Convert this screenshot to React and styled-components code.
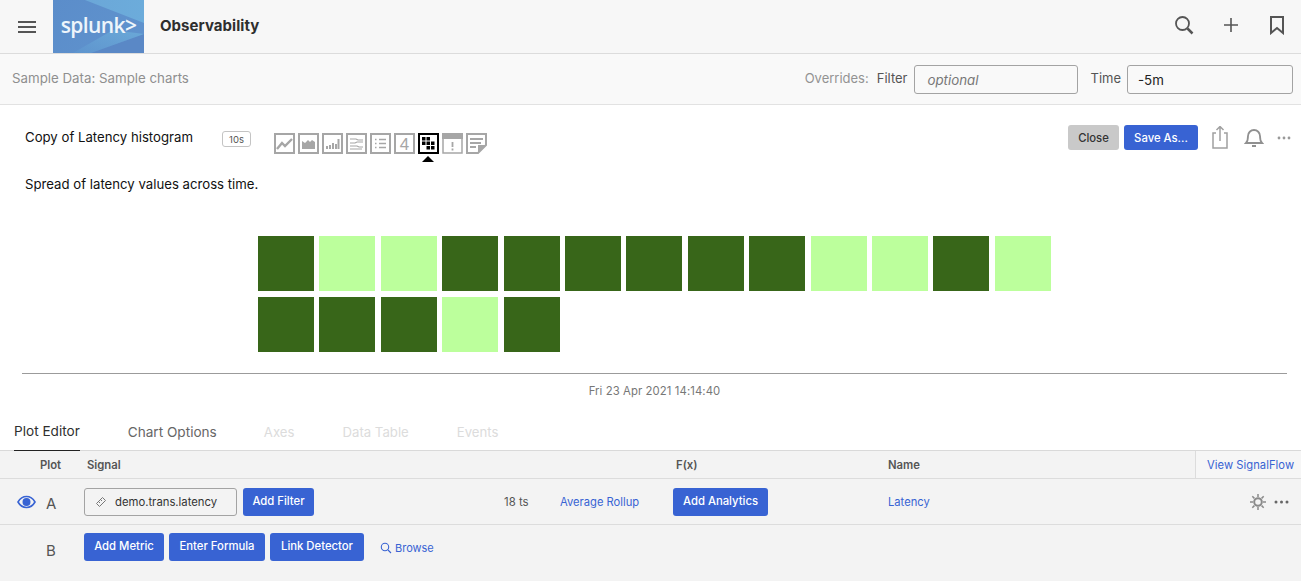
import React from "react";
import styled, { createGlobalStyle } from "styled-components";

const Global = createGlobalStyle`
  html, body { margin: 0; padding: 0; background: #fff; }
  body { font-family: Inter, "Liberation Sans", sans-serif; color: #2b2b2b; }
  * { box-sizing: border-box; }
`;
const Page = styled.div`width: 1301px; height: 581px; overflow: hidden; display: flex; flex-direction: column;`;
const TopBar = styled.header`height: 54px; flex: none; display: flex; align-items: center; background: #f7f7f7; border-bottom: 1px solid #dcdcdc;`;
const MenuBtn = styled.div`width: 53px; display: flex; justify-content: center;`;
const Logo = styled.div`
  position: relative; width: 91px; height: 53px; display: flex; align-items: center; justify-content: center; padding-bottom: 3px;
  color: #eef5fb; font-family: "Open Sans", sans-serif; font-size: 21px; letter-spacing: -0.6px; font-weight: 600;
  span { position: relative; }
  svg { position: absolute; inset: 0; }
`;
const Product = styled.div`margin-left: 16px; margin-top: -2px; font-size: 15px; font-weight: 700; color: #2e2e2e; flex: 1; letter-spacing: 0.05px;`;
const TopIcons = styled.div`display: flex; align-items: center; padding-right: 16px; margin-top: -3px; color: #555;
  svg + svg { margin-left: 25px; }
  svg:last-child { margin-left: 27px; }
`;
const SubBar = styled.div`height: 51px; flex: none; display: flex; align-items: center; background: #f9f9f9; border-bottom: 1px solid #e2e2e2; padding: 0 8px 0 12px;`;
const Crumb = styled.div`font-size: 13.3px; color: #8f8f8f; flex: 1; margin-top: -2px;`;
const OverrideLabel = styled.span`font-size: 13px; color: ${p => p.$dim ? "#939393" : "#555"}; margin-right: ${p => p.$gap}px; margin-top: -2px;`;
const Field = styled.div`
  width: ${p => p.$w}px; height: 29px; border: 1px solid #a3a3a3; border-radius: 3px; display: flex; align-items: center;
  padding: 2px 0 0 ${p => p.$pad}px; font-size: 13.3px; margin-right: ${p => p.$mr || 0}px;
  color: ${p => p.$italic ? "#777" : "#222"}; font-style: ${p => p.$italic ? "italic" : "normal"};
`;
const ChartArea = styled.section`height: 300px; flex: none; background: #fff; padding: 0 14px 0 22px; display: flex; flex-direction: column;`;
const ChartHead = styled.div`height: 53px; flex: none; display: flex; align-items: flex-start; padding-left: 3px;`;
const ChartTitle = styled.div`font-size: 13.2px; color: #111; width: 197px; padding-top: 24px; white-space: nowrap;`;
const Res = styled.div`width: 29px; height: 16px; margin-top: 26px; border: 1px solid #c4c4c4; border-radius: 3px; font-size: 9.5px; color: #555; display: flex; align-items: center; justify-content: center;`;
const Types = styled.div`display: flex; gap: 3px; margin: 28px 0 0 23px;`;
const TypeBtn = styled.div`position: relative; width: 21px; height: 21px; color: ${p => p.$on ? "#000" : "#a6a6a6"};
  svg { display: block; }
`;
const Caret = styled.div`position: absolute; left: 4px; top: 23px; width: 0; height: 0; border-left: 6.5px solid transparent; border-right: 6.5px solid transparent; border-bottom: 6px solid #000;`;
const Actions = styled.div`margin-left: auto; margin-right: -4px; display: flex; align-items: center; padding-top: 20px; color: #999;`;
const ActionIcon = styled.svg`margin-left: ${p => p.$ml}px; flex: none;`;
const Btn = styled.div`
  height: ${p => p.$h || 28}px; border-radius: 3px; display: inline-flex; align-items: center; justify-content: center; white-space: nowrap;
  background: ${p => p.$grey ? "#c9c9c9" : "#3863d3"}; color: ${p => p.$grey ? "#333" : "#fff"}; font-size: 11.3px; font-weight: 500;
  width: ${p => p.$w}px; flex: none; padding-bottom: ${p => p.$up || 0}px; margin-left: ${p => p.$ml || 0}px;
`;
const Desc = styled.div`height: 78px; flex: none; padding: 18px 0 0 3px; font-size: 13.2px; color: #111;`;
const Tiles = styled.div`display: grid; grid-template-columns: repeat(13, 56px); grid-auto-rows: 55px; gap: 6px 5.4px; margin-left: 236px; height: 137px; flex: none;`;
const Tile = styled.div`background: ${p => p.$light ? "#bcff9c" : "#386619"};`;
const AxisLine = styled.div`height: 1px; flex: none; background: #9b9b9b;`;
const AxisDate = styled.div`text-align: center; font-size: 11.3px; color: #777; padding-top: 10px; letter-spacing: 0.1px;`;
const Tabs = styled.nav`height: 46px; flex: none; display: flex; align-items: flex-end; padding-left: 14px; border-bottom: 1px solid #d9d9d9; background: #fff;`;
const Tab = styled.div`
  font-size: ${p => p.$off ? 13.2 : 13.6}px; color: ${p => p.$off ? "#dcdcdc" : p.$active ? "#2f2f2f" : "#666"};
  margin-right: ${p => p.$mr}px; height: ${p => p.$active ? 28 : 26}px;
  ${p => p.$active ? "border-bottom: 1px solid #222; margin-bottom: -1px;" : ""}
`;
const Table = styled.div`flex: 1; background: #f3f3f3;`;
const Cols = styled.div`height: 28px; display: flex; align-items: center; border-bottom: 1px solid #dcdcdc; font-size: 11.3px; font-weight: 600; color: #555;`;
const ColLabel = styled.div`width: ${p => p.$w}px; flex: none; padding-left: ${p => p.$pad || 0}px;`;
const ViewFlow = styled.div`margin-left: auto; width: 106px; height: 27px; border-left: 1px solid #dcdcdc; display: flex; align-items: center; padding-left: 11px; font-weight: 400; color: #3863d3; font-size: 11.2px; background: #f6f6f6; letter-spacing: 0.05px;`;
const Row = styled.div`height: ${p => p.$h}px; display: flex; align-items: ${p => p.$top ? "flex-start" : "center"}; padding-top: ${p => p.$pt || 0}px; ${p => p.$line ? "border-bottom: 1px solid #dcdcdc;" : ""}`;
const EyeCell = styled.div`width: 46px; padding-left: 17px; display: flex; color: #3863d3;`;
const PlotLetter = styled.div`width: 38px; font-size: 15px; color: #555; margin-top: ${p => p.$mt || 0}px;`;
const Signal = styled.div`width: 153px; height: 28px; border: 1px solid #a3a3a3; border-radius: 3px; display: flex; align-items: center; padding-left: 10px; gap: 8px; font-size: 11.3px; color: #333; margin-right: 6px; flex: none;`;
const TsCount = styled.div`font-size: 11.4px; color: #555; margin-left: 190px; width: 56px;`;
const LinkText = styled.div`font-size: 11.2px; color: #3863d3; width: ${p => p.$w ? p.$w + "px" : "auto"}; flex: none; margin-left: ${p => p.$ml || 0}px;`;
const RowTail = styled.div`margin-left: auto; display: flex; align-items: center; gap: 8px; padding-right: 12px; color: #888;`;
const BtnRow = styled.div`display: flex; gap: 5px; margin-right: 16px;`;
const Browse = styled.div`display: flex; align-items: center; gap: 3px; font-size: 11px; color: #3863d3; padding-top: 8px;`;

const tileData = [0,1,1,0,0,0,0,0,0,1,1,0,1,0,0,0,1,0];

const Frame = ({ children }) => (
  <svg width="21" height="21" viewBox="0 0 21 21" fill="none" stroke="currentColor">
    <rect x="1" y="1" width="19" height="19" strokeWidth="2" />
    {children}
  </svg>
);
const typeIcons = [
  <Frame><path d="M3 16l5-6 3 3 7-7" strokeWidth="2.400" /></Frame>,
  <Frame><path d="M4 16V8l3 2 3-3 2 2 2-2 3 2v7z" fill="currentColor" stroke="none" /></Frame>,
  <Frame><path d="M5 16v-3M8 16v-4M11 16v-6M14 16v-5M16.500 16V6" strokeWidth="2" /></Frame>,
  <Frame><path d="M4 6h6l2 1h5M4 10h5l2-1h6M4 13h7l2 1h4M4 16h12" strokeWidth="1.200" /></Frame>,
  <Frame><path d="M5 6.500h1.500M9 6.500h7M5 10.500h1.500M9 10.500h7M5 14.500h1.500M9 14.500h7" strokeWidth="1.300" /></Frame>,
  <Frame><text x="10.500" y="16.500" textAnchor="middle" fontSize="17" fontFamily="Liberation Sans" fill="currentColor" stroke="none">4</text></Frame>,
  <Frame><path d="M4 4h3.500v3.500H4zM8.500 4H12v3.500H8.500zM4 8.500h3.500V12H4zM8.500 8.500H12V12H8.500zM13 8.500h3.500V12H13zM8.500 13H12v3.500H8.500zM13 13h3.500v3.500H13z" fill="currentColor" stroke="none" /></Frame>,
  <svg width="21" height="21" viewBox="0 0 21 21" fill="none" stroke="currentColor"><rect x="1" y="1" width="19" height="19" strokeWidth="1.500" /><rect x="0" y="0" width="21" height="6" fill="currentColor" stroke="none" /><path d="M10.500 9v5M10.500 15.500v2" strokeWidth="1.800" /></svg>,
  <svg width="21" height="21" viewBox="0 0 21 21" fill="none" stroke="currentColor"><path d="M1 1h19v11l-8 8H1z" strokeWidth="2" /><path d="M4 6h13M4 10h11M4 14h6" strokeWidth="1.800" /><path d="M12 20v-8h8z" fill="currentColor" stroke="none" /></svg>,
];

export default function App() {
  return (
    <Page>
      <Global />
      <TopBar>
        <MenuBtn>
          <svg width="20" height="14" viewBox="0 0 20 14" stroke="#555" strokeWidth="2"><path d="M1 2h18M1 7h18M1 12h18" /></svg>
        </MenuBtn>
        <Logo>
          <svg width="91" height="53" viewBox="0 0 91 53">
            <defs>
              <linearGradient id="lgA" x1="0" y1="0" x2="1" y2="0.4"><stop offset="0" stopColor="#5b8dca" /><stop offset="1" stopColor="#5f92cd" /></linearGradient>
              <linearGradient id="lgB" x1="0" y1="0" x2="1" y2="0"><stop offset="0" stopColor="#6ba7d8" /><stop offset="1" stopColor="#6cacdb" /></linearGradient>
              <linearGradient id="lgC" x1="0" y1="1" x2="1" y2="0"><stop offset="0" stopColor="#5f97cf" /><stop offset="1" stopColor="#72b8df" /></linearGradient>
            </defs>
            <rect width="91" height="53" fill="url(#lgA)" />
            <path d="M32 0h59v23z" fill="url(#lgB)" />
            <path d="M91 34v19H38z" fill="#5a88c6" />
            <path d="M91 34L38 53 20 53 60 30z" fill="url(#lgC)" opacity="0.6" />
          </svg>
          <span>splunk&gt;</span>
        </Logo>
        <Product>Observability</Product>
        <TopIcons>
          <svg width="22" height="22" viewBox="0 0 22 22" fill="none" stroke="#555" strokeWidth="1.800"><circle cx="9.500" cy="9.500" r="6.500" /><path d="M14.500 14.500l5 5" strokeWidth="2.500" /></svg>
          <svg width="22" height="22" viewBox="0 0 22 22" fill="none" stroke="#555" strokeWidth="1.600"><path d="M11 4v14M4 11h14" /></svg>
          <svg width="16" height="20" viewBox="0 0 16 20" fill="none" stroke="#555" strokeWidth="2"><path d="M2 2h12v16l-6-5-6 5z" /></svg>
        </TopIcons>
      </TopBar>
      <SubBar>
        <Crumb>Sample Data: Sample charts</Crumb>
        <OverrideLabel $dim $gap={8}>Overrides:</OverrideLabel>
        <OverrideLabel $gap={7}>Filter</OverrideLabel>
        <Field $w={164} $pad={12} $italic $mr={12}>optional</Field>
        <OverrideLabel $gap={6}>Time</OverrideLabel>
        <Field $w={166} $pad={10}>-5m</Field>
      </SubBar>
      <ChartArea>
        <ChartHead>
          <ChartTitle>Copy of Latency histogram</ChartTitle>
          <Res>10s</Res>
          <Types>
            {typeIcons.map((icon, i) => (
              <TypeBtn key={i} $on={i === 6}>{icon}{i === 6 && <Caret />}</TypeBtn>
            ))}
          </Types>
          <Actions>
            <Btn $grey $w={51} $h={25}>Close</Btn>
            <Btn $w={74} $h={25} $ml={5}>Save As...</Btn>
            <ActionIcon $ml={13} width="18" height="24" viewBox="0 1 18 24" fill="none" stroke="#a0a0a0" strokeWidth="1.500"><path d="M5 8H2v15h14V8h-3M9 16V2M5.500 5L9 1.500 12.500 5" /></ActionIcon>
            <ActionIcon $ml={15} width="20" height="24" viewBox="0 1 20 24" fill="none" stroke="#909090" strokeWidth="1.800"><path d="M2 18c2-2 2-4 2-7a6 6 0 0112 0c0 3 0 5 2 7zM8 21h4" /></ActionIcon>
            <ActionIcon $ml={13} width="14" height="4" viewBox="0 0 14 4" fill="#999"><circle cx="2" cy="2" r="1.400" /><circle cx="7" cy="2" r="1.400" /><circle cx="12" cy="2" r="1.400" /></ActionIcon>
          </Actions>
        </ChartHead>
        <Desc>Spread of latency values across time.</Desc>
        <Tiles>
          {tileData.map((light, i) => <Tile key={i} $light={!!light} />)}
        </Tiles>
        <AxisLine />
        <AxisDate>Fri 23 Apr 2021 14:14:40</AxisDate>
      </ChartArea>
      <Tabs>
        <Tab $active $mr={48}>Plot Editor</Tab>
        <Tab $mr={47}>Chart Options</Tab>
        <Tab $off $mr={48}>Axes</Tab>
        <Tab $off $mr={48}>Data Table</Tab>
        <Tab $off $mr={0}>Events</Tab>
      </Tabs>
      <Table>
        <Cols>
          <ColLabel $w={87} $pad={40}>Plot</ColLabel>
          <ColLabel $w={589}>Signal</ColLabel>
          <ColLabel $w={212}>F(x)</ColLabel>
          <ColLabel $w={200}>Name</ColLabel>
          <ViewFlow>View SignalFlow</ViewFlow>
        </Cols>
        <Row $h={46} $line>
          <EyeCell>
            <svg width="19" height="14" viewBox="0 0 19 14" fill="none" stroke="currentColor" strokeWidth="1.600"><path d="M1 7c2-3.500 5-5.500 8.500-5.500S16 3.500 18 7c-2 3.500-5 5.500-8.500 5.500S3 10.500 1 7z" /><circle cx="9.500" cy="7" r="3.200" fill="currentColor" /></svg>
          </EyeCell>
          <PlotLetter $mt={3}>A</PlotLetter>
          <Signal>
            <svg width="12" height="12" viewBox="0 0 12 12" fill="none" stroke="#777" strokeWidth="1"><path d="M7.500 1.500l3 3-6 6-3-3zM3.500 5.500l1.500 1.500M5.500 3.500l1.500 1.500" /></svg>
            demo.trans.latency
          </Signal>
          <Btn $w={71} $up={2}>Add Filter</Btn>
          <TsCount>18 ts</TsCount>
          <LinkText $w={113}>Average Rollup</LinkText>
          <Btn $w={95} $up={2}>Add Analytics</Btn>
          <LinkText $ml={120}>Latency</LinkText>
          <RowTail>
            <svg width="16" height="16" viewBox="0 0 16 16" fill="none" stroke="#8a8a8a"><circle cx="8" cy="8" r="3.800" strokeWidth="2" /><path d="M8 0v3M8 13v3M0 8h3M13 8h3M2.300 2.300l2.100 2.100M11.600 11.600l2.100 2.100M13.700 2.300l-2.100 2.100M4.400 11.600l-2.100 2.100" strokeWidth="1.500" /></svg>
            <svg width="15" height="4" viewBox="0 0 15 4" fill="#666"><circle cx="2" cy="2" r="1.500" /><circle cx="7.500" cy="2" r="1.500" /><circle cx="13" cy="2" r="1.500" /></svg>
          </RowTail>
        </Row>
        <Row $h={56} $pt={8} $top>
          <EyeCell />
          <PlotLetter $mt={8}>B</PlotLetter>
          <BtnRow>
            <Btn $w={80} $up={2}>Add Metric</Btn>
            <Btn $w={96} $up={2}>Enter Formula</Btn>
            <Btn $w={94} $up={2}>Link Detector</Btn>
          </BtnRow>
          <Browse>
            <svg width="12" height="12" viewBox="0 0 12 12" fill="none" stroke="currentColor" strokeWidth="1.100"><circle cx="5" cy="5" r="3.700" /><path d="M8 8l3 3" /></svg>
            Browse
          </Browse>
        </Row>
      </Table>
    </Page>
  );
}
